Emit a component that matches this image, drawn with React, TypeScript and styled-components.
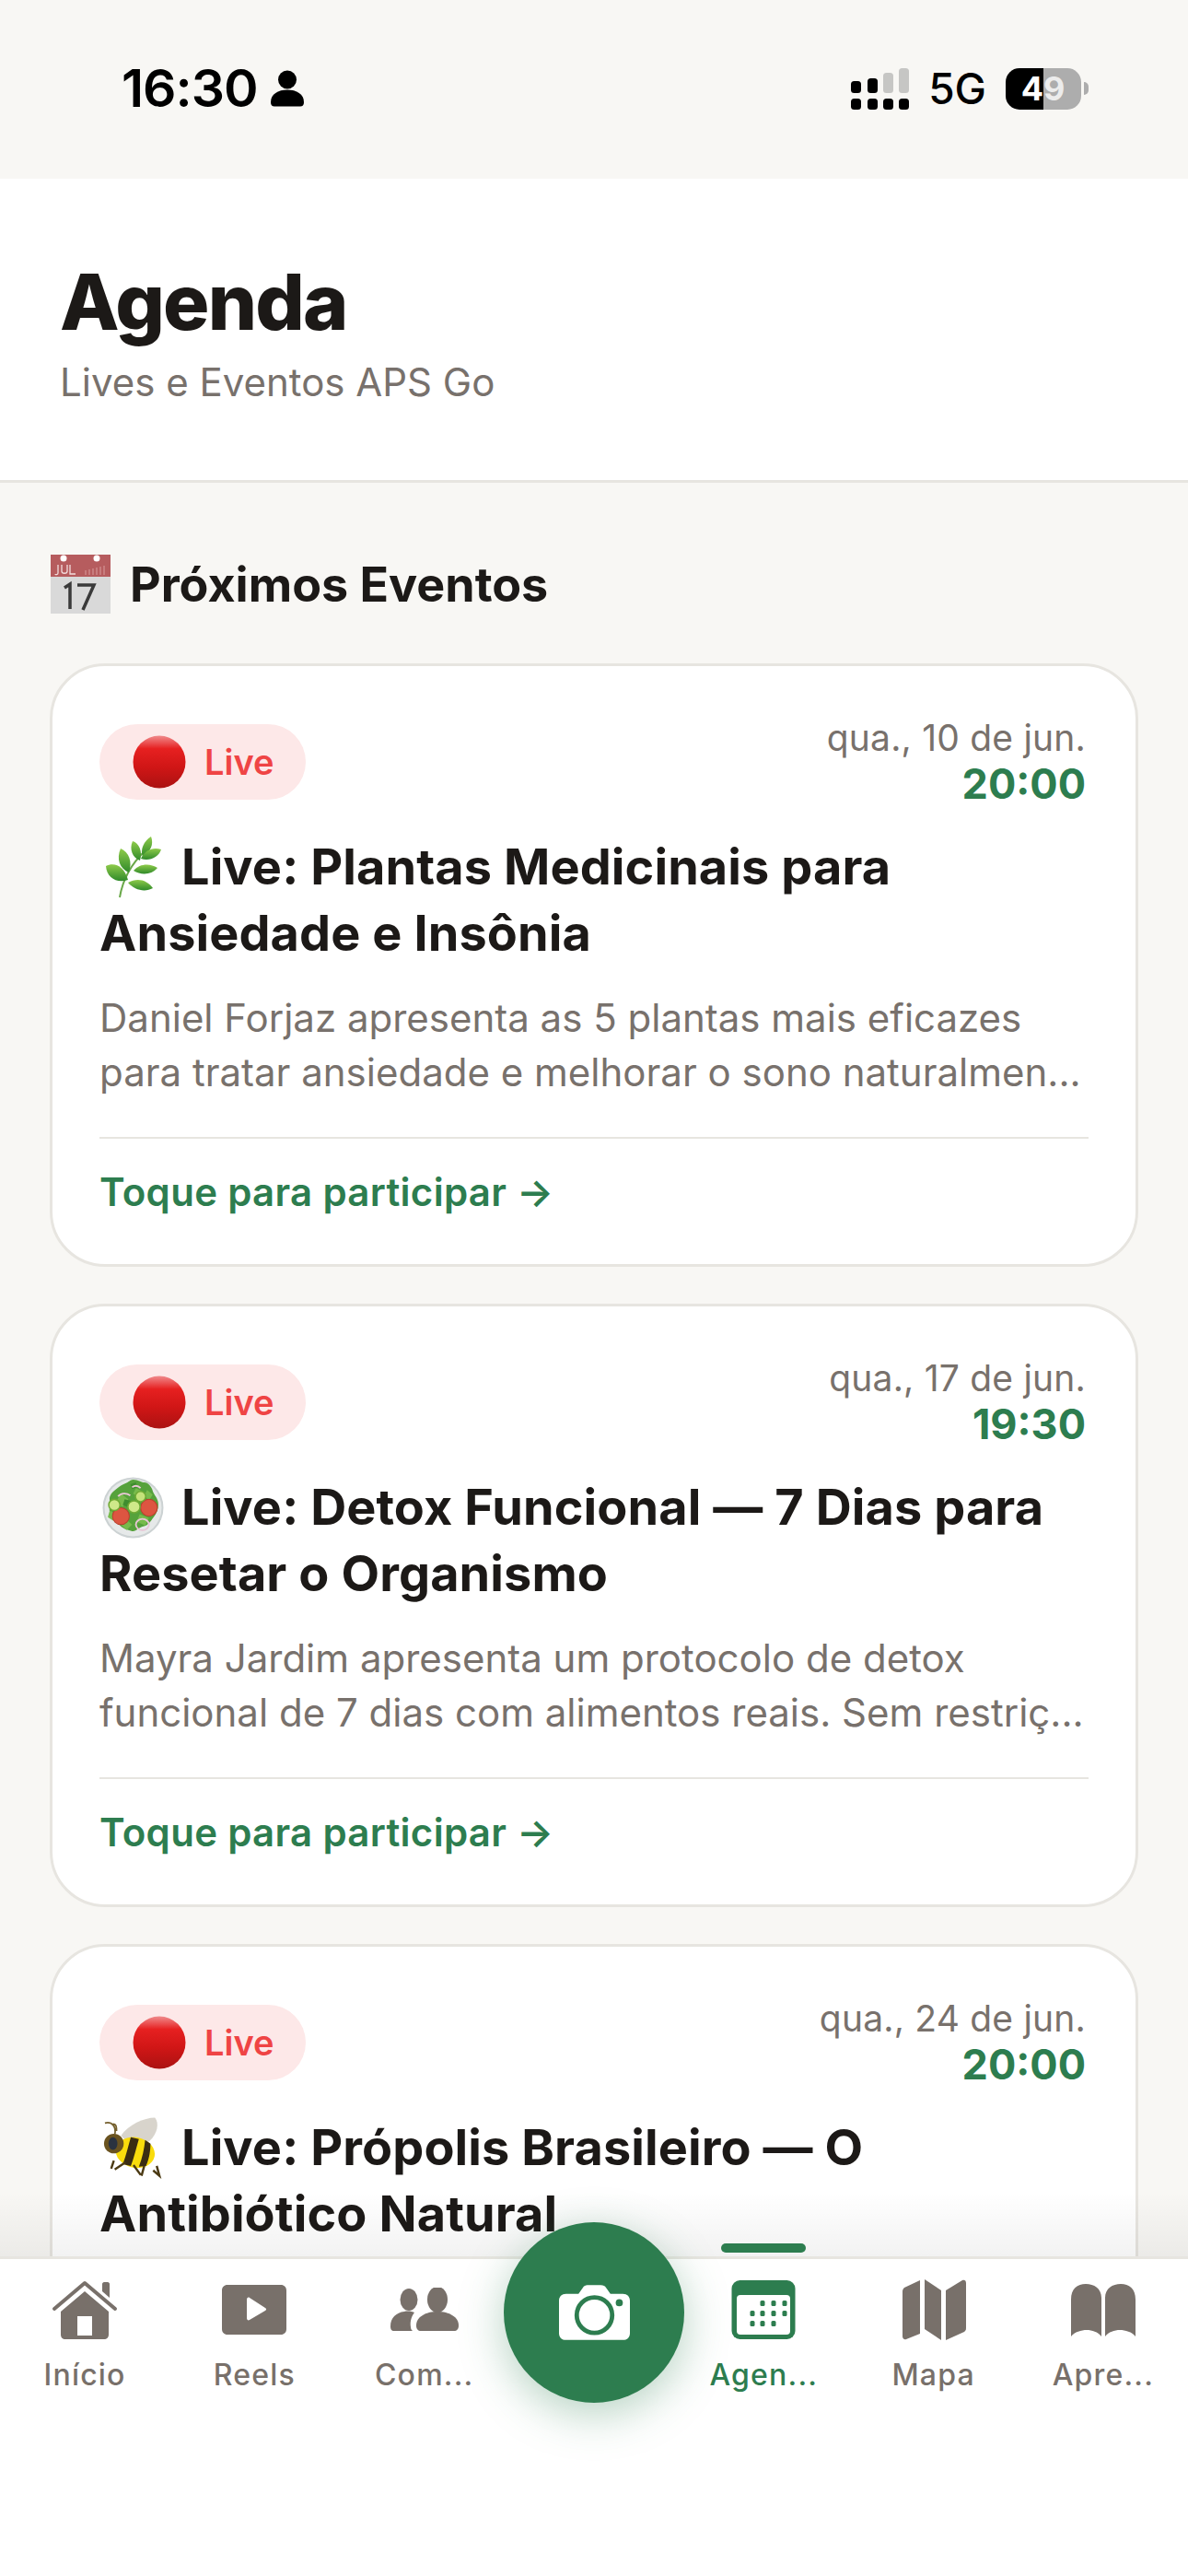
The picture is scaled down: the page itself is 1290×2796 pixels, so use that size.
import React from "react";
import styled, { createGlobalStyle } from "styled-components";

const GlobalStyle = createGlobalStyle`
    html, body {
        margin: 0;
        padding: 0;
        background-color: #f8f7f4;
        font-family: Inter, "Liberation Sans", sans-serif;
    }
    * {
        box-sizing: border-box;
    }
`;

const Page = styled.div`
    position: relative;
    display: flex;
    flex-direction: column;
    width: 1290px;
    height: 2796px;
    overflow: hidden;
    background-color: #f8f7f4;
`;

const StatusBar = styled.div`
    display: flex;
    justify-content: space-between;
    align-items: flex-start;
    height: 194px;
    padding: 62px 108px 0 132px;
    color: #000;
`;

const StatusLeft = styled.div`
    display: flex;
    align-items: center;
    gap: 13px;
`;

const Clock = styled.span`
    font-size: 57px;
    line-height: 68px;
    font-weight: 600;
    letter-spacing: -1px;
`;

const StatusRight = styled.div`
    display: flex;
    align-items: center;
    height: 68px;
    gap: 21px;
`;

const Network = styled.span`
    font-size: 46px;
    font-weight: 500;
    line-height: 68px;
`;

const BatteryWrap = styled.div`
    display: flex;
    align-items: center;
    gap: 3px;
`;

const BatteryBody = styled.div`
    display: flex;
    width: 82px;
    height: 45px;
    border-radius: 15px;
    overflow: hidden;
    font-size: 36px;
    font-weight: 700;
    line-height: 45px;
`;

const BatteryHalf = styled.span<{ $full?: boolean }>`
    flex: 1;
    display: flex;
    justify-content: ${(p) => (p.$full ? "flex-end" : "flex-start")};
    background-color: ${(p) => (p.$full ? "#000" : "#adadad")};
    color: ${(p) => (p.$full ? "#fff" : "#ececec")};
`;

const BatteryNub = styled.div`
    width: 5px;
    height: 14px;
    border-radius: 0 7px 7px 0;
    background-color: #adadad;
`;

const Header = styled.div`
    height: 330px;
    padding: 88px 65px 0;
    background-color: #fff;
    border-bottom: 3px solid #e7e5e0;
`;

const Title = styled.h1`
    margin: 0;
    font-size: 84px;
    line-height: 92px;
    font-weight: 800;
    letter-spacing: -1.8px;
    color: #1c1917;
`;

const Subtitle = styled.p`
    margin: 15px 0 0;
    font-size: 42px;
    line-height: 52px;
    color: #78716c;
`;

const Content = styled.div`
    flex: 1;
    min-height: 0;
    overflow: hidden;
    padding: 74px 54px 0;
`;

const SectionTitle = styled.h2`
    display: flex;
    align-items: center;
    gap: 21px;
    margin: 0 0 50px;
    padding-left: 1px;
    height: 72px;
    font-size: 52px;
    font-weight: 700;
    color: #1c1917;
`;

const CardList = styled.div`
    display: flex;
    flex-direction: column;
    gap: 40px;
`;

const Card = styled.div`
    padding: 63px 51px 0;
    height: 655px;
    flex-shrink: 0;
    background-color: #fff;
    border: 3px solid #e7e5e0;
    border-radius: 60px;
`;

const CardTop = styled.div`
    display: flex;
    justify-content: space-between;
    align-items: flex-start;
`;

const LiveBadge = styled.div`
    display: flex;
    align-items: center;
    gap: 20px;
    height: 82px;
    padding: 0 34px 0 36px;
    border-radius: 41px;
    background-color: #fde8e8;
    font-size: 38px;
    font-weight: 600;
    color: #ef4444;
`;

const DateBlock = styled.div`
    display: flex;
    flex-direction: column;
    align-items: flex-end;
    margin-top: -10px;
    padding-right: 3px;
`;

const DateText = styled.span`
    font-size: 39px;
    line-height: 50px;
    letter-spacing: 0.2px;
    color: #78716c;
`;

const TimeText = styled.span`
    font-size: 45px;
    line-height: 50px;
    font-weight: 700;
    color: #2d7d4f;
`;

const CardTitle = styled.h3`
    margin: 29px 0 0;
    font-size: 54px;
    line-height: 72px;
    font-weight: 700;
    letter-spacing: 0.1px;
    color: #1c1917;
`;

const EmojiBox = styled.span`
    display: inline-flex;
    align-items: center;
    justify-content: center;
    width: 72px;
    height: 72px;
    margin-right: 17px;
    vertical-align: top;
`;

const Description = styled.p`
    margin: 26px 0 0;
    font-size: 42px;
    line-height: 59px;
    color: #78716c;
`;

const Divider = styled.div`
    height: 2px;
    margin-top: 41px;
    background-color: #e7e5e0;
`;

const CardAction = styled.div`
    margin-top: 28px;
    font-size: 42px;
    line-height: 60px;
    font-weight: 600;
    letter-spacing: 0.3px;
    color: #2d7d4f;
`;

const BottomFade = styled.div`
    position: absolute;
    left: 0;
    right: 0;
    bottom: 347px;
    height: 70px;
    background: linear-gradient(to bottom, rgba(0, 0, 0, 0), rgba(0, 0, 0, 0.05));
    pointer-events: none;
`;

const BottomNav = styled.nav`
    position: relative;
    display: grid;
    grid-template-columns: repeat(7, 184.3px);
    justify-content: center;
    height: 347px;
    flex-shrink: 0;
    padding-top: 23px;
    background-color: #fff;
    border-top: 3px solid #e7e5e0;
`;

const NavItem = styled.div<{ $active?: boolean }>`
    position: relative;
    display: flex;
    flex-direction: column;
    align-items: center;
    color: ${(p) => (p.$active ? "#2d7d4f" : "#78706a")};
`;

const NavIcon = styled.div`
    display: flex;
    width: 80px;
    height: 64px;
    justify-content: center;
    align-items: center;
`;

const NavLabel = styled.span`
    margin-top: 19px;
    font-size: 32px;
    line-height: 40px;
    font-weight: 500;
    letter-spacing: 1.2px;
`;

const ActiveBar = styled.div`
    position: absolute;
    top: -40px;
    left: 46px;
    width: 92px;
    height: 10px;
    border-radius: 5px;
    background-color: #2d7d4f;
`;

const CameraButton = styled.div`
    position: absolute;
    top: 2412px;
    left: 547px;
    display: flex;
    align-items: center;
    justify-content: center;
    width: 196px;
    height: 196px;
    border-radius: 50%;
    background-color: #2d7d4f;
    box-shadow: 0 12px 48px rgba(45, 125, 79, 0.35);
`;

const PersonIcon = () => (
    <svg width="38" height="40" viewBox="0 0 38 40">
        <circle cx="19" cy="10.500" r="10" fill="#000" />
        <path d="M1 35c0-9 8-13.500 18-13.500S37 26 37 35c0 3-1.500 4.500-4 4.500H5C2.500 39.500 1 38 1 35z" fill="#000" />
    </svg>
);

const SignalIcon = () => (
    <svg width="63" height="45" viewBox="0 0 63 45">
        <rect x="0" y="14" width="11" height="13" rx="3.500" fill="#000" />
        <rect x="18" y="11" width="11" height="16" rx="3.500" fill="#000" />
        <rect x="35" y="5" width="11" height="22" rx="3.500" fill="#c6c6c4" />
        <rect x="52" y="0" width="11" height="27" rx="3.500" fill="#c6c6c4" />
        <rect x="0" y="33" width="11" height="12" rx="3.500" fill="#000" />
        <rect x="18" y="33" width="11" height="12" rx="3.500" fill="#000" />
        <rect x="35" y="33" width="11" height="12" rx="3.500" fill="#000" />
        <rect x="52" y="33" width="11" height="12" rx="3.500" fill="#000" />
    </svg>
);

const CalendarEmoji = () => (
    <svg width="65" height="64" viewBox="0 0 65 64">
        <rect width="65" height="64" fill="#d9d9d9" />
        <rect width="65" height="24" fill="#b65c5e" />
        <circle cx="14" cy="4" r="3.500" fill="#fff" />
        <circle cx="50" cy="4" r="3.500" fill="#fff" />
        <path d="M8 11v9c0 2-3 2-3 1M12 11v7c0 3 6 3 6 0v-7M21 11v10h6" stroke="#f2dcdc" strokeWidth="1.300" fill="none" />
        <path d="M38 17v5M42 16v6M46 15v7M50 14v8M54 13v9M58 12v10" stroke="#d18f90" strokeWidth="1.300" />
        <path d="M15 36l6-4v27" stroke="#3a3a3a" strokeWidth="3.500" fill="none" />
        <path d="M29 33h18L35 60" stroke="#3a3a3a" strokeWidth="3.500" fill="none" />
    </svg>
);

const RedCircleEmoji = () => (
    <svg width="58" height="58" viewBox="0 0 58 58">
        <defs>
            <linearGradient id="redBall" x1="0" y1="0" x2="0" y2="1">
                <stop offset="0" stopColor="#f08a8c" />
                <stop offset="0.25" stopColor="#e62020" />
                <stop offset="0.6" stopColor="#d01616" />
                <stop offset="1" stopColor="#ab1212" />
            </linearGradient>
        </defs>
        <circle cx="29" cy="29" r="28.500" fill="url(#redBall)" />
    </svg>
);

const herbLeaves = [
    "M1 32c9-5 20 0 24 15-12 4-23-2-24-15z",
    "M17 13c9 4 13 14 9 26-10-4-14-15-9-26z",
    "M30 5c7 2 11 11 8 21-8-3-12-12-8-21z",
    "M50 0c3 8 0 16-9 22-3-8 1-17 9-22z",
    "M61 14c-3 9-13 13-22 10 4-9 13-13 22-10z",
    "M57 34c-7 8-18 8-26 3 7-8 18-8 26-3z",
    "M52 56c-9 5-20 2-27-6 10-6 21-3 27 6z",
];

const HerbEmoji = () => (
    <svg width="61" height="67" viewBox="0 0 61 67">
        <defs>
            <linearGradient id="herbLeaf" x1="0" y1="0" x2="0" y2="1">
                <stop offset="0" stopColor="#8fcb4a" />
                <stop offset="1" stopColor="#2f8a2a" />
            </linearGradient>
        </defs>
        <path d="M16 66C19 48 28 30 44 15" stroke="#6aa84a" strokeWidth="2" fill="none" />
        {herbLeaves.map((d) => (
            <path key={d} d={d} fill="url(#herbLeaf)" />
        ))}
    </svg>
);

const SaladEmoji = () => (
    <svg width="67" height="67" viewBox="0 0 66 66">
        <circle cx="33" cy="33" r="32.500" fill="#ccd2d3" />
        <circle cx="33" cy="33" r="30.500" fill="#e6e9e9" />
        <path d="M33 3c6 0 8 3 12 3s8 5 9 9 6 8 6 14-2 10-5 14-6 9-11 10-8 6-12 5-9-2-13-6-10-8-11-14 1-8 0-13 3-9 7-12 7-5 10-6 5-4 8-4z" fill="#56a23c" />
        <path d="M20 18l8 6-6 8-8-4zM40 40l10 4-4 8-9-4zM26 46l6 5-6 6-6-6zM36 12l8 4-4 6-7-4zM8 36l6 3-2 8-6-4zM48 14l6 5-4 6-5-5z" fill="#77bb4c" />
        <path d="M24 24l8 2-3 7-7-3zM30 8l6-2 2 5-6 2z" fill="#3f8d2f" />
        <circle cx="20" cy="42" r="9" fill="#dd5541" stroke="#b93f2d" strokeWidth="1" />
        <circle cx="50" cy="33" r="9" fill="#dd5541" stroke="#b93f2d" strokeWidth="1" />
        <circle cx="13" cy="30" r="6" fill="#cfe98a" stroke="#6faa35" strokeWidth="1.500" />
        <circle cx="34" cy="32" r="6.500" fill="#cfe98a" stroke="#6faa35" strokeWidth="1.500" />
        <circle cx="41" cy="21" r="5.500" fill="#c4e27a" stroke="#6faa35" strokeWidth="1.500" />
        <ellipse cx="43" cy="51" rx="7" ry="6" fill="none" stroke="#e8c5d5" strokeWidth="1.800" />
        <path d="M17 21c3-4 9-4 13-1" fill="none" stroke="#ecc8d8" strokeWidth="1.800" />
        <path d="M32 11c3-2 6-2 9 1" fill="none" stroke="#ecc8d8" strokeWidth="1.800" />
    </svg>
);

const BeeEmoji = () => (
    <svg width="64" height="67" viewBox="0 0 66 68">
        <path d="M20 20C28 8 46 0 58 0c5 6 3 18-6 26-8 6-22 6-32-6z" fill="#d8d4cc" />
        <ellipse cx="36" cy="39" rx="22" ry="17" transform="rotate(12 36 39)" fill="#f9dc0c" />
        <path d="M31 22c-3 10-5 20-9 30l9 2c4-10 6-20 9-30zM47 25c-1 10-3 20-7 30l8-1c4-9 5-18 5-25z" fill="#3a2d12" />
        <circle cx="12" cy="29" r="11" fill="#6a5320" />
        <ellipse cx="11" cy="29" rx="5" ry="7" fill="#2a3240" />
        <path d="M13 19C15 10 10 4 2 6M11 7c4 0 4 4 4 8" stroke="#75602e" strokeWidth="1.800" fill="none" />
        <path d="M12 48l-3 9M25 50l-12 8M34 53l8 11M60 54l3 11-7-6M46 54l-3 11" stroke="#4b3a14" strokeWidth="2.500" fill="none" />
    </svg>
);

const HomeIcon = () => (
    <svg width="72" height="64" viewBox="0 0 72 64" fill="currentColor">
        <path d="M55 4c0-1 1-2 2-2h4c1 0 2 1 2 2v15l-8-7z" />
        <path d="M3 31L36 3l33 28" fill="none" stroke="currentColor" strokeWidth="4" strokeLinecap="round" strokeLinejoin="round" />
        <path fillRule="evenodd" d="M36 12l26 22v25c0 3-2 5-5 5H15c-3 0-5-2-5-5V34zM28 39v21h16V39z" />
    </svg>
);

const ReelsIcon = () => (
    <svg width="72" height="56" viewBox="0 0 72 56" fill="currentColor">
        <path fillRule="evenodd" d="M7 1h58c3.500 0 6 2.500 6 6v42c0 3.500-2.500 6-6 6H7c-3.500 0-6-2.500-6-6V7c0-3.500 2.500-6 6-6zM28 17v20c0 2 1.500 3 3 2l17-10c1.500-1 1.500-2 0-3L31 15c-1.500-1-3 0-3 2z" />
    </svg>
);

const PeopleIcon = () => (
    <svg width="74" height="48" viewBox="0 0 74 48" fill="currentColor">
        <ellipse cx="20" cy="13" rx="9.500" ry="12" />
        <ellipse cx="51" cy="13" rx="11" ry="14" />
        <path d="M0 42c0-9 6-15 15-16 4-1 9 0 11 1-3 4-5 9-4 16 0 2 1 3 2 4H4c-3 0-4-2-4-5z" />
        <path d="M28 41c0-9 10-15 23-15s23 6 23 15c0 4-2 6-5 6H33c-3 0-5-2-5-6z" />
    </svg>
);

const CalendarIcon = () => {
    const dots = [
        [34, 25], [46, 25], [58, 25],
        [23, 36], [34, 36], [46, 36], [58, 36],
        [23, 47], [34, 47], [46, 47],
    ];
    return (
        <svg width="70" height="64" viewBox="0 0 70 64">
            <rect x="0.500" y="0" width="69" height="64" rx="9" fill="currentColor" />
            <rect x="6" y="16" width="58" height="43" rx="4" fill="#fff" />
            {dots.map(([cx, cy]) => (
                <rect key={`${cx}-${cy}`} x={cx - 2.5} y={cy - 3} width="5" height="6" rx="1.500" fill="currentColor" />
            ))}
        </svg>
    );
};

const MapIcon = () => (
    <svg width="70" height="66" viewBox="0 0 70 66" fill="currentColor">
        <path d="M20 1v58L5 65c-2 1-4-1-4-3V13c0-2 1-3 2-4z" />
        <path d="M25 0l18 12v54L25 54z" />
        <path d="M48 12L66 1c2-1 4 0 4 3v49c0 2-1 3-2 4L48 66z" />
    </svg>
);

const BookIcon = () => (
    <svg width="72" height="58" viewBox="0 0 72 58" fill="currentColor">
        <path d="M1 18C1 6 8 1 17 1s17 5 17 15v42c-4-5-10-7-16-7S5 53 1 58z" />
        <path d="M71 18C71 6 64 1 55 1S38 6 38 16v42c4-5 10-7 16-7s13 2 17 7z" />
    </svg>
);

const CameraIcon = () => (
    <svg width="77" height="60" viewBox="0 0 80 62">
        <path d="M8 10h14l5-7c1-2 3-3 5-3h15c3 0 5 1 6 3l5 7h14c5 0 8 3 8 8v36c0 5-3 8-8 8H8c-5 0-8-3-8-8V18c0-5 3-8 8-8z" fill="#fff" />
        <circle cx="40" cy="34" r="20" fill="none" stroke="#2d7d4f" strokeWidth="5" />
        <circle cx="68" cy="20" r="4" fill="#2d7d4f" />
    </svg>
);

// the third card runs under the nav, so only its top part is filled in
const events = [
    {
        emoji: <HerbEmoji />,
        date: "qua., 10 de jun.",
        time: "20:00",
        title: "Live: Plantas Medicinais para Ansiedade e Insônia",
        description: "Daniel Forjaz apresenta as 5 plantas mais eficazes para tratar ansiedade e melhorar o sono naturalmen...",
    },
    {
        emoji: <SaladEmoji />,
        date: "qua., 17 de jun.",
        time: "19:30",
        title: "Live: Detox Funcional — 7 Dias para Resetar o Organismo",
        description: "Mayra Jardim apresenta um protocolo de detox funcional de 7 dias com alimentos reais. Sem restriç...",
    },
    {
        emoji: <BeeEmoji />,
        date: "qua., 24 de jun.",
        time: "20:00",
        title: "Live: Própolis Brasileiro — O Antibiótico Natural",
    },
];

const navItems = [
    { label: "Início", icon: <HomeIcon /> },
    { label: "Reels", icon: <ReelsIcon /> },
    { label: "Com...", icon: <PeopleIcon /> },
    null,
    { label: "Agen...", icon: <CalendarIcon />, active: true },
    { label: "Mapa", icon: <MapIcon /> },
    { label: "Apre...", icon: <BookIcon /> },
];

const App = () => {
    return (
        <Page>
            <GlobalStyle />
            <StatusBar>
                <StatusLeft>
                    <Clock>16:30</Clock>
                    <PersonIcon />
                </StatusLeft>
                <StatusRight>
                    <SignalIcon />
                    <Network>5G</Network>
                    <BatteryWrap>
                        <BatteryBody>
                            <BatteryHalf $full>4</BatteryHalf>
                            <BatteryHalf>9</BatteryHalf>
                        </BatteryBody>
                        <BatteryNub />
                    </BatteryWrap>
                </StatusRight>
            </StatusBar>
            <Header>
                <Title>Agenda</Title>
                <Subtitle>Lives e Eventos APS Go</Subtitle>
            </Header>
            <Content>
                <SectionTitle>
                    <CalendarEmoji />
                    Próximos Eventos
                </SectionTitle>
                <CardList>
                    {events.map((event) => (
                        <Card key={event.title}>
                            <CardTop>
                                <LiveBadge>
                                    <RedCircleEmoji />
                                    Live
                                </LiveBadge>
                                <DateBlock>
                                    <DateText>{event.date}</DateText>
                                    <TimeText>{event.time}</TimeText>
                                </DateBlock>
                            </CardTop>
                            <CardTitle>
                                <EmojiBox>{event.emoji}</EmojiBox>
                                {event.title}
                            </CardTitle>
                            {event.description && (
                                <>
                                    <Description>{event.description}</Description>
                                    <Divider />
                                    <CardAction>Toque para participar →</CardAction>
                                </>
                            )}
                        </Card>
                    ))}
                </CardList>
            </Content>
            <BottomFade />
            <BottomNav>
                {navItems.map((item, index) =>
                    item ? (
                        <NavItem key={item.label} $active={item.active}>
                            {item.active && <ActiveBar />}
                            <NavIcon>{item.icon}</NavIcon>
                            <NavLabel>{item.label}</NavLabel>
                        </NavItem>
                    ) : (
                        <div key={index} />
                    )
                )}
            </BottomNav>
            <CameraButton>
                <CameraIcon />
            </CameraButton>
        </Page>
    );
};

export default App;
